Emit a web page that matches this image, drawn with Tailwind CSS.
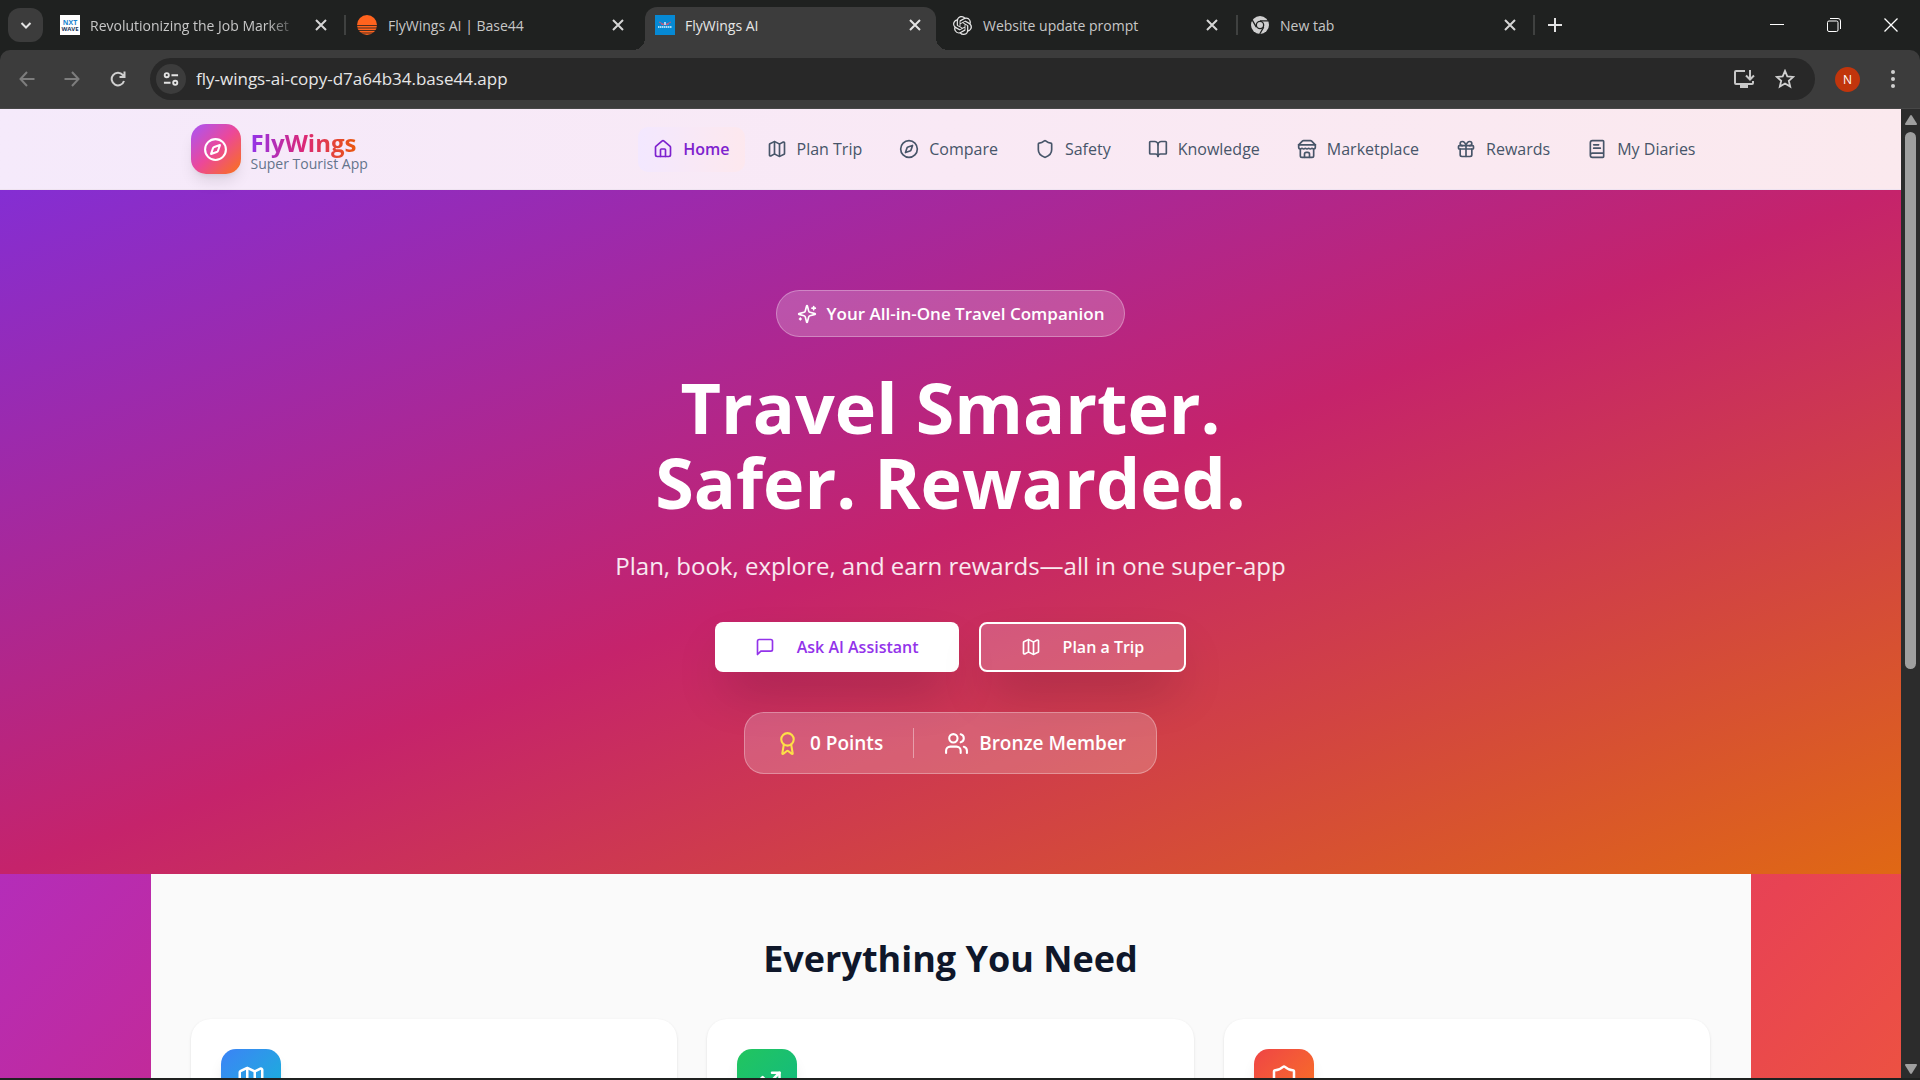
<!DOCTYPE html>
<html lang="en">

<head>
  <meta charset="UTF-8" />
  <meta name="viewport" content="width=device-width, initial-scale=1.0" />
  <title>FlyWings AI</title>
  <script src="https://cdn.jsdelivr.net/npm/@tailwindcss/browser@4"></script>
</head>

<body class="h-screen flex flex-col overflow-hidden bg-[#1f2120] font-['Open_Sans',sans-serif]">

  <!-- Tab strip -->
  <div class="h-[50px] shrink-0 flex items-center bg-[#1f2120] text-[#c7c7c7] text-[14px]">
    <button aria-label="Search tabs" class="ml-2 mr-[5px] w-[35px] h-[34px] shrink-0 rounded-xl bg-[#3c3c3c] flex items-center justify-center">
      <svg class="w-4 h-4" viewBox="0 0 16 16" fill="none" stroke="#e3e3e3" stroke-width="2"><path d="M3.5 6 8 10.500 12.500 6" /></svg>
    </button>

    <div class="w-[296px] flex items-center pl-3 pr-[17px]">
      <span class="w-5 h-5 shrink-0 bg-white flex flex-col justify-center text-center text-[7px] leading-[7px] font-bold text-[#17375e]"><span class="text-[#1c86d1]">NXT</span><span class="text-[6px] leading-[6px]">WAVE</span></span>
      <span class="ml-[10px] flex-1 overflow-hidden whitespace-nowrap mask-r-from-85%">Revolutionizing the Job Market</span>
      <button aria-label="Close tab" class="ml-4"><svg class="w-3 h-3" viewBox="0 0 12 12" stroke="#d5d5d5" stroke-width="2"><path d="M1 1l10 10M11 1 1 11" /></svg></button>
    </div>

    <div class="w-[301px] flex items-center pr-[21px]">
      <span class="w-[2px] h-5 shrink-0 bg-[#3f4140]"></span>
      <svg class="ml-[11px] w-5 h-5 shrink-0" viewBox="0 0 20 20">
        <circle cx="10" cy="10" r="10" fill="#ff631e" />
        <path d="M0 10.500h20M0 13h20M1 15.500h18M3 18h14" stroke="#1f2120" stroke-width=".8" />
      </svg>
      <span class="ml-[11px] flex-1 whitespace-nowrap">FlyWings AI | Base44</span>
      <button aria-label="Close tab"><svg class="w-3 h-3" viewBox="0 0 12 12" stroke="#d5d5d5" stroke-width="2"><path d="M1 1l10 10M11 1 1 11" /></svg></button>
    </div>

    <!-- Active tab -->
    <div class="relative w-[291px] h-[43px] self-end flex items-center pb-[7px] pl-[10px] pr-[15px] rounded-t-xl bg-[#3c3c3c] text-[#e6e6e6]">
      <span class="absolute bottom-0 -left-3 w-3 h-3 bg-[radial-gradient(circle_at_0_0,#1f2120_12px,#3c3c3c_12px)]"></span>
      <span class="absolute bottom-0 -right-3 w-3 h-3 bg-[radial-gradient(circle_at_100%_0,#1f2120_12px,#3c3c3c_12px)]"></span>
      <svg class="w-5 h-5 shrink-0" viewBox="0 0 20 20">
        <rect width="20" height="20" fill="#0689d4" />
        <path d="M4 7l5 2.500M16 7l-5 2.500M6 9l3 1M14 9l-3 1" stroke="#c95a7c" stroke-width="1" />
        <path d="M10 7v3" stroke="#e8e8f5" stroke-width="1.500" />
        <path d="M3 12h14" stroke="#a9dcf7" stroke-width="2" stroke-dasharray="1.500 .5" />
      </svg>
      <span class="ml-[10px] flex-1 whitespace-nowrap">FlyWings AI</span>
      <button aria-label="Close tab"><svg class="w-3 h-3" viewBox="0 0 12 12" stroke="#e6e6e6" stroke-width="2"><path d="M1 1l10 10M11 1 1 11" /></svg></button>
    </div>

    <div class="w-[300px] flex items-center pl-[17px] pr-[18px]">
      <svg class="w-[19px] h-[19px] shrink-0" viewBox="0 0 24 24" fill="#e6e6e6"><path d="M22.2819 9.8211a5.9847 5.9847 0 0 0-.5157-4.9108 6.0462 6.0462 0 0 0-6.5098-2.9A6.0651 6.0651 0 0 0 4.9807 4.1818a5.9847 5.9847 0 0 0-3.9977 2.9 6.0462 6.0462 0 0 0 .7427 7.0966 5.98 5.98 0 0 0 .511 4.9107 6.051 6.051 0 0 0 6.5146 2.9001A5.9847 5.9847 0 0 0 13.2599 24a6.0557 6.0557 0 0 0 5.7718-4.2058 5.9894 5.9894 0 0 0 3.9977-2.9001 6.0557 6.0557 0 0 0-.7475-7.0729zm-9.022 12.6081a4.4755 4.4755 0 0 1-2.8764-1.0408l.1419-.0804 4.7783-2.7582a.7948.7948 0 0 0 .3927-.6813v-6.7369l2.02 1.1686a.071.071 0 0 1 .038.052v5.5826a4.504 4.504 0 0 1-4.4945 4.4944zm-9.6607-4.1254a4.4708 4.4708 0 0 1-.5346-3.0137l.142.0852 4.783 2.7582a.7712.7712 0 0 0 .7806 0l5.8428-3.3685v2.3324a.0804.0804 0 0 1-.0332.0615L9.74 19.9502a4.4992 4.4992 0 0 1-6.1408-1.6464zM2.3408 7.8956a4.485 4.485 0 0 1 2.3655-1.9728V11.6a.7664.7664 0 0 0 .3879.6765l5.8144 3.3543-2.0201 1.1685a.0757.0757 0 0 1-.071 0l-4.8303-2.7865A4.504 4.504 0 0 1 2.3408 7.872zm16.5963 3.8558L13.1038 8.364 15.1192 7.2a.0757.0757 0 0 1 .071 0l4.8303 2.7913a4.4944 4.4944 0 0 1-.6765 8.1042v-5.6772a.79.79 0 0 0-.407-.667zm2.0107-3.0231l-.142-.0852-4.7735-2.7818a.7759.7759 0 0 0-.7854 0L9.409 9.2297V6.8974a.0662.0662 0 0 1 .0284-.0615l4.8303-2.7866a4.4992 4.4992 0 0 1 6.6802 4.66zM8.3065 12.863l-2.02-1.1638a.0804.0804 0 0 1-.038-.0567V6.0742a4.4992 4.4992 0 0 1 7.3757-3.4537l-.142.0805L8.704 5.459a.7948.7948 0 0 0-.3927.6813zm1.0976-2.3654l2.602-1.4998 2.6069 1.4998v2.9994l-2.5974 1.4997-2.6067-1.4997Z" /></svg>
      <span class="ml-[11px] flex-1 whitespace-nowrap">Website update prompt</span>
      <button aria-label="Close tab"><svg class="w-3 h-3" viewBox="0 0 12 12" stroke="#d5d5d5" stroke-width="2"><path d="M1 1l10 10M11 1 1 11" /></svg></button>
    </div>

    <div class="w-[299px] flex items-center">
      <span class="w-[2px] h-5 shrink-0 bg-[#3f4140]"></span>
      <svg class="ml-[13px] w-[18px] h-[18px] shrink-0" viewBox="0 0 18 18">
        <circle cx="9" cy="9" r="9" fill="#cfcfcf" />
        <path d="M9 4.800h8M5.300 11.100l-4-6.900M12.700 11.100l-4 6.900" stroke="#1f2120" stroke-width="1.300" />
        <circle cx="9" cy="9" r="4.300" fill="#1f2120" />
        <circle cx="9" cy="9" r="3" fill="#cfcfcf" />
      </svg>
      <span class="ml-[11px] flex-1 whitespace-nowrap">New tab</span>
      <button aria-label="Close tab"><svg class="w-3 h-3" viewBox="0 0 12 12" stroke="#d5d5d5" stroke-width="2"><path d="M1 1l10 10M11 1 1 11" /></svg></button>
      <span class="ml-[17px] w-[2px] h-5 shrink-0 bg-[#3f4140]"></span>
    </div>
    <button aria-label="New tab" class="ml-[13px]"><svg class="w-[14px] h-[14px]" viewBox="0 0 14 14" stroke="#e3e3e3" stroke-width="2"><path d="M7 0v14M0 7h14" /></svg></button>

    <!-- Window controls -->
    <div class="ml-auto mr-[22px] flex items-center gap-[43px]">
      <button aria-label="Minimize"><svg class="w-[14px] h-[14px]" viewBox="0 0 14 14" stroke="#fff" fill="none"><path d="M0 6.500h14" /></svg></button>
      <button aria-label="Restore"><svg class="w-[14px] h-[14px]" viewBox="0 0 14 14" stroke="#fff" fill="none"><rect x=".5" y="3" width="10.500" height="10.500" rx="1.500" /><path d="M3 .5h8a2.500 2.500 0 0 1 2.500 2.500v8" /></svg></button>
      <button aria-label="Close"><svg class="w-[14px] h-[14px]" viewBox="0 0 14 14" stroke="#fff" stroke-width="1.300" fill="none"><path d="M.5.5l13 13M13.500.5l-13 13" /></svg></button>
    </div>
  </div>

  <!-- Toolbar -->
  <div class="h-[59px] shrink-0 flex items-center rounded-t-[10px] bg-[#3c3c3c] border-b border-[#474747]">
    <button aria-label="Back" class="ml-[19px]"><svg class="w-4 h-4" viewBox="0 0 16 16" fill="none" stroke="#7d7d7d" stroke-width="2"><path d="M15.500 8H1.500M8 1 1.500 8 8 15" /></svg></button>
    <button aria-label="Forward" class="ml-[29px]"><svg class="w-4 h-4" viewBox="0 0 16 16" fill="none" stroke="#7d7d7d" stroke-width="2"><path d="M.5 8h14M8 1l6.500 7L8 15" /></svg></button>
    <button aria-label="Reload" class="ml-[30px]"><svg class="w-4 h-4" viewBox="0 0 16 16" fill="none" stroke="#d0d0d0" stroke-width="2"><path d="M14 10A6.300 6.300 0 1 1 12.800 4L14.500 5.500M14.500 .5v5.500H9.500" /></svg></button>
    <div class="ml-6 flex-1 h-[42px] flex items-center rounded-full bg-[#282828] pl-[6px] pr-5">
      <button aria-label="View site information" class="w-[30px] h-[30px] rounded-full bg-[#3c3c3c] flex items-center justify-center">
        <svg class="w-4 h-4" viewBox="0 0 17 17" fill="none" stroke="#e3e3e3" stroke-width="2"><circle cx="4" cy="4.500" r="2.200" /><path d="M9 4.500h7M1 12.500h7" /><circle cx="13" cy="12.500" r="2.200" /></svg>
      </button>
      <input type="text" aria-label="Address" value="fly-wings-ai-copy-d7a64b34.base44.app" class="ml-[10px] flex-1 bg-transparent text-[17px] text-[#e6e6e6] outline-none" />
      <button aria-label="Install app"><svg class="w-[22px] h-[20px]" viewBox="0 0 22 20" fill="none" stroke="#c7c7c7" stroke-width="2"><path d="M12 2H3a1 1 0 0 0-1 1v11a1 1 0 0 0 1 1h16a1 1 0 0 0 1-1v-2M17 1v9M13 6.500l4 4 4-4" /><path d="M7 17.500h8" stroke-width="3" /></svg></button>
      <button aria-label="Bookmark this tab" class="ml-5"><svg class="w-5 h-5" viewBox="0 0 20 20" fill="none" stroke="#d0d0d0" stroke-width="1.800"><path d="M10 1.900l2.300 5.500 6 .5-4.500 3.900 1.400 5.800L10 14.500l-5.200 3.100 1.400-5.800L1.700 7.900l6-.5z" /></svg></button>
    </div>
    <button aria-label="Profile" class="ml-5 w-[25px] h-[25px] rounded-full bg-[#c1350c] text-white text-[12px] leading-[25px]">N</button>
    <button aria-label="Menu" class="ml-6 mr-[18px]"><svg class="w-[18px] h-[18px]" viewBox="0 0 18 18" fill="#d0d0d0"><circle cx="9" cy="2" r="2" /><circle cx="9" cy="9" r="2" /><circle cx="9" cy="16" r="2" /></svg></button>
  </div>

  <div class="flex-1 min-h-0 flex mb-[2px]">
    <div class="flex-1 min-w-0 overflow-hidden">

      <!-- Header -->
      <header class="relative h-[81px] border-b border-[#eee3f0] bg-linear-to-r from-[#f5eafb] via-[#f9e9f5] to-[#fbe9ee]">
        <div class="max-w-[1600px] mx-auto h-20 px-10 flex items-center justify-between">
          <a href="#" class="flex items-center gap-[10px]">
            <span class="w-[50px] h-[50px] rounded-[15px] bg-linear-to-br/srgb from-[#a855f7] via-[#ec4899] to-[#f97316] shadow-lg flex items-center justify-center">
              <svg class="w-[25px] h-[25px]" viewBox="0 0 24 24" fill="none" stroke="#fff" stroke-width="2" stroke-linecap="round" stroke-linejoin="round"><path d="m16.240 7.760-1.804 5.411a2 2 0 0 1-1.265 1.265L7.760 16.240l1.804-5.411a2 2 0 0 1 1.265-1.265z" /><circle cx="12" cy="12" r="10" /></svg>
            </span>
            <span class="flex flex-col">
              <span class="pt-1 text-[24px] leading-[25px] font-bold"><span class="text-transparent bg-clip-text bg-linear-to-r/srgb from-[#9333ea] via-[#db2777] to-[#ea580c]">FlyWings</span></span>
              <span class="text-[14px] leading-[18px] text-[#64748b]">Super Tourist App</span>
            </span>
          </a>

          <nav class="flex items-center gap-[7px] text-[16px] text-[#475569]">
            <a href="#" class="h-[45px] px-[15px] flex items-center gap-[10px] rounded-[10px] bg-linear-to-r from-[#f3e8ff] to-[#fde8ee] font-semibold text-[#7e22ce]">
              <svg class="w-5 h-5" viewBox="0 0 24 24" fill="none" stroke="currentColor" stroke-width="2" stroke-linecap="round" stroke-linejoin="round"><path d="M15 21v-8a1 1 0 0 0-1-1h-4a1 1 0 0 0-1 1v8" /><path d="M3 10a2 2 0 0 1 .709-1.528l7-5.999a2 2 0 0 1 2.582 0l7 5.999A2 2 0 0 1 21 10v9a2 2 0 0 1-2 2H5a2 2 0 0 1-2-2z" /></svg>
              Home
            </a>
            <a href="#" class="h-[45px] px-[15px] flex items-center gap-[10px]">
              <svg class="w-5 h-5" viewBox="0 0 24 24" fill="none" stroke="currentColor" stroke-width="2" stroke-linecap="round" stroke-linejoin="round"><path d="M14.106 5.553a2 2 0 0 0 1.788 0l3.659-1.830A1 1 0 0 1 21 4.619v12.764a1 1 0 0 1-.553.894l-4.553 2.277a2 2 0 0 1-1.788 0l-4.212-2.106a2 2 0 0 0-1.788 0l-3.659 1.830A1 1 0 0 1 3 19.381V6.618a1 1 0 0 1 .553-.894l4.553-2.277a2 2 0 0 1 1.788 0z" /><path d="M15 5.764v15M9 3.236v15" /></svg>
              Plan Trip
            </a>
            <a href="#" class="h-[45px] px-[15px] flex items-center gap-[10px]">
              <svg class="w-5 h-5" viewBox="0 0 24 24" fill="none" stroke="currentColor" stroke-width="2" stroke-linecap="round" stroke-linejoin="round"><path d="m16.240 7.760-1.804 5.411a2 2 0 0 1-1.265 1.265L7.760 16.240l1.804-5.411a2 2 0 0 1 1.265-1.265z" /><circle cx="12" cy="12" r="10" /></svg>
              Compare
            </a>
            <a href="#" class="h-[45px] px-[15px] flex items-center gap-[10px]">
              <svg class="w-5 h-5" viewBox="0 0 24 24" fill="none" stroke="currentColor" stroke-width="2" stroke-linecap="round" stroke-linejoin="round"><path d="M20 13c0 5-3.500 7.500-7.660 8.950a1 1 0 0 1-.67-.01C7.500 20.500 4 18 4 13V6a1 1 0 0 1 1-1c2 0 4.500-1.200 6.240-2.720a1.170 1.170 0 0 1 1.520 0C14.510 3.810 17 5 19 5a1 1 0 0 1 1 1z" /></svg>
              Safety
            </a>
            <a href="#" class="h-[45px] px-[15px] flex items-center gap-[10px]">
              <svg class="w-5 h-5" viewBox="0 0 24 24" fill="none" stroke="currentColor" stroke-width="2" stroke-linecap="round" stroke-linejoin="round"><path d="M12 7v14" /><path d="M3 18a1 1 0 0 1-1-1V4a1 1 0 0 1 1-1h5a4 4 0 0 1 4 4 4 4 0 0 1 4-4h5a1 1 0 0 1 1 1v13a1 1 0 0 1-1 1h-6a3 3 0 0 0-3 3 3 3 0 0 0-3-3z" /></svg>
              Knowledge
            </a>
            <a href="#" class="h-[45px] px-[15px] flex items-center gap-[10px]">
              <svg class="w-5 h-5" viewBox="0 0 24 24" fill="none" stroke="currentColor" stroke-width="2" stroke-linecap="round" stroke-linejoin="round"><path d="m2 7 4.410-4.410A2 2 0 0 1 7.830 2h8.340a2 2 0 0 1 1.420.590L22 7" /><path d="M4 12v8a2 2 0 0 0 2 2h12a2 2 0 0 0 2-2v-8" /><path d="M15 22v-4a2 2 0 0 0-2-2h-2a2 2 0 0 0-2 2v4" /><path d="M2 7h20" /><path d="M22 7v3a2 2 0 0 1-2 2a2.700 2.700 0 0 1-1.590-.630.7.7 0 0 0-.820 0A2.700 2.700 0 0 1 16 12a2.700 2.700 0 0 1-1.590-.630.7.7 0 0 0-.820 0A2.700 2.700 0 0 1 12 12a2.700 2.700 0 0 1-1.590-.630.7.7 0 0 0-.820 0A2.700 2.700 0 0 1 8 12a2.700 2.700 0 0 1-1.590-.630.7.7 0 0 0-.820 0A2.700 2.700 0 0 1 4 12a2 2 0 0 1-2-2V7" /></svg>
              Marketplace
            </a>
            <a href="#" class="h-[45px] px-[15px] flex items-center gap-[10px]">
              <svg class="w-5 h-5" viewBox="0 0 24 24" fill="none" stroke="currentColor" stroke-width="2" stroke-linecap="round" stroke-linejoin="round"><rect x="3" y="8" width="18" height="4" rx="1" /><path d="M12 8v13" /><path d="M19 12v7a2 2 0 0 1-2 2H7a2 2 0 0 1-2-2v-7" /><path d="M7.500 8a2.500 2.500 0 0 1 0-5A4.800 8 0 0 1 12 8a4.800 8 0 0 1 4.500-5 2.500 2.500 0 0 1 0 5" /></svg>
              Rewards
            </a>
            <a href="#" class="h-[45px] px-[15px] flex items-center gap-[10px]">
              <svg class="w-5 h-5" viewBox="0 0 24 24" fill="none" stroke="currentColor" stroke-width="2" stroke-linecap="round" stroke-linejoin="round"><path d="M4 19.500v-15A2.500 2.500 0 0 1 6.500 2H19a1 1 0 0 1 1 1v18a1 1 0 0 1-1 1H6.500a1 1 0 0 1 0-5H20" /><path d="M8 11h8M8 7h6" /></svg>
              My Diaries
            </a>
          </nav>
        </div>
      </header>

      <!-- Hero -->
      <section class="bg-linear-to-br/srgb from-[#842ed3] via-[#c5236b] to-[#e06814] pt-[100px] pb-[100px] flex flex-col items-center text-white">
        <div class="h-[47px] px-5 flex items-center gap-[10px] rounded-full border border-white/30 bg-white/20 text-[17px] font-semibold">
          <svg class="w-5 h-5" viewBox="0 0 24 24" fill="none" stroke="currentColor" stroke-width="2" stroke-linecap="round" stroke-linejoin="round"><path d="M9.937 15.500A2 2 0 0 0 8.500 14.063l-6.135-1.582a.5.5 0 0 1 0-.962L8.500 9.936A2 2 0 0 0 9.937 8.500l1.582-6.135a.5.5 0 0 1 .963 0L14.063 8.500A2 2 0 0 0 15.500 9.937l6.135 1.581a.5.5 0 0 1 0 .964L15.500 14.063a2 2 0 0 0-1.437 1.437l-1.582 6.135a.5.5 0 0 1-.963 0z" /><path d="M20 3v4M22 5h-4M4 17v2M5 18H3" /></svg>
          Your All-in-One Travel Companion
        </div>

        <h1 class="mt-[33px] text-center text-[70px] leading-[75px] font-bold">Travel Smarter.<br />Safer. Rewarded.</h1>

        <p class="mt-7 text-[24px] leading-[35px] text-white/90">Plan, book, explore, and earn rewards—all in one super-app</p>

        <div class="mt-[39px] flex gap-5 text-[16px] font-semibold">
          <button class="h-[50px] px-10 flex items-center gap-[22px] rounded-[8px] bg-white text-[#9333ea] shadow-2xl">
            <svg class="w-5 h-5" viewBox="0 0 24 24" fill="none" stroke="currentColor" stroke-width="2" stroke-linecap="round" stroke-linejoin="round"><path d="M21 15a2 2 0 0 1-2 2H7l-4 4V5a2 2 0 0 1 2-2h14a2 2 0 0 1 2 2z" /></svg>
            Ask AI Assistant
          </button>
          <button class="h-[50px] px-10 flex items-center gap-[22px] rounded-[8px] border-2 border-white bg-white/20 shadow-2xl">
            <svg class="w-5 h-5" viewBox="0 0 24 24" fill="none" stroke="currentColor" stroke-width="2" stroke-linecap="round" stroke-linejoin="round"><path d="M14.106 5.553a2 2 0 0 0 1.788 0l3.659-1.830A1 1 0 0 1 21 4.619v12.764a1 1 0 0 1-.553.894l-4.553 2.277a2 2 0 0 1-1.788 0l-4.212-2.106a2 2 0 0 0-1.788 0l-3.659 1.830A1 1 0 0 1 3 19.381V6.618a1 1 0 0 1 .553-.894l4.553-2.277a2 2 0 0 1 1.788 0z" /><path d="M15 5.764v15M9 3.236v15" /></svg>
            Plan a Trip
          </button>
        </div>

        <div class="mt-10 h-[62px] px-[30px] flex items-center gap-[30px] rounded-[20px] border border-white/30 bg-white/20 text-[19px] font-semibold">
          <div class="flex items-center gap-[10px]">
            <svg class="w-[25px] h-[25px] text-[#fde047]" viewBox="0 0 24 24" fill="none" stroke="currentColor" stroke-width="2" stroke-linecap="round" stroke-linejoin="round"><path d="m15.477 12.890 1.515 8.526a.5.5 0 0 1-.810.470l-3.580-2.687a1 1 0 0 0-1.197 0l-3.586 2.686a.5.5 0 0 1-.810-.469l1.514-8.526" /><circle cx="12" cy="8" r="6" /></svg>
            0 Points
          </div>
          <span class="w-px h-[30px] bg-white/40"></span>
          <div class="flex items-center gap-[10px]">
            <svg class="w-[25px] h-[25px]" viewBox="0 0 24 24" fill="none" stroke="currentColor" stroke-width="2" stroke-linecap="round" stroke-linejoin="round"><path d="M16 21v-2a4 4 0 0 0-4-4H6a4 4 0 0 0-4 4v2" /><circle cx="9" cy="7" r="4" /><path d="M22 21v-2a4 4 0 0 0-3-3.870M16 3.130a4 4 0 0 1 0 7.750" /></svg>
            Bronze Member
          </div>
        </div>
      </section>

      <!-- Features -->
      <div class="bg-[linear-gradient(135deg,#b42db9_0%,#c22a99_17%,#e84353_83%,#ed543f_100%)]">
        <section class="max-w-[1600px] mx-auto px-10 pt-[60px] bg-[#fafafa]">
          <h2 class="text-center text-[36px] leading-[50px] font-bold text-[#0f172a]">Everything You Need</h2>
          <div class="mt-[35px] grid grid-cols-3 gap-[30px]">
            <div class="p-[30px] rounded-[20px] bg-white shadow-sm">
              <div class="w-[60px] h-[60px] rounded-[15px] bg-linear-to-br from-[#3b82f6] to-[#06b6d4] shadow-lg flex items-center justify-center">
                <svg class="w-[30px] h-[30px]" viewBox="0 0 24 24" fill="none" stroke="#fff" stroke-width="2" stroke-linecap="round" stroke-linejoin="round"><path d="M14.106 5.553a2 2 0 0 0 1.788 0l3.659-1.830A1 1 0 0 1 21 4.619v12.764a1 1 0 0 1-.553.894l-4.553 2.277a2 2 0 0 1-1.788 0l-4.212-2.106a2 2 0 0 0-1.788 0l-3.659 1.830A1 1 0 0 1 3 19.381V6.618a1 1 0 0 1 .553-.894l4.553-2.277a2 2 0 0 1 1.788 0z" /><path d="M15 5.764v15M9 3.236v15" /></svg>
              </div>
            </div>
            <div class="p-[30px] rounded-[20px] bg-white shadow-sm">
              <div class="w-[60px] h-[60px] rounded-[15px] bg-linear-to-br from-[#22c55e] to-[#10b981] shadow-lg flex items-center justify-center">
                <svg class="w-[30px] h-[30px]" viewBox="0 0 24 24" fill="none" stroke="#fff" stroke-width="2" stroke-linecap="round" stroke-linejoin="round"><path d="M22 7l-8.500 8.500-5-5L2 17" /><path d="M16 7h6v6" /></svg>
              </div>
            </div>
            <div class="p-[30px] rounded-[20px] bg-white shadow-sm">
              <div class="w-[60px] h-[60px] rounded-[15px] bg-linear-to-br from-[#ef4444] to-[#f97316] shadow-lg flex items-center justify-center">
                <svg class="w-[30px] h-[30px]" viewBox="0 0 24 24" fill="none" stroke="#fff" stroke-width="2" stroke-linecap="round" stroke-linejoin="round"><path d="M20 13c0 5-3.500 7.500-7.660 8.950a1 1 0 0 1-.67-.01C7.500 20.500 4 18 4 13V6a1 1 0 0 1 1-1c2 0 4.500-1.200 6.240-2.720a1.170 1.170 0 0 1 1.520 0C14.510 3.810 17 5 19 5a1 1 0 0 1 1 1z" /></svg>
              </div>
            </div>
          </div>
        </section>
      </div>
    </div>

    <!-- Scrollbar -->
    <div class="w-[19px] shrink-0 flex flex-col items-center bg-[#2c2c2c] pt-[6px] pb-1">
      <svg class="w-3 h-[10px]" viewBox="0 0 12 10" fill="#9f9f9f"><path d="M5 .8a1.200 1.200 0 0 1 2 0L11.800 8.500A1 1 0 0 1 11 10H1a1 1 0 0 1-.8-1.500z" /></svg>
      <div class="mt-[7px] w-[11px] h-[56%] rounded-full bg-[#9f9f9f]"></div>
      <svg class="mt-auto w-3 h-[10px]" viewBox="0 0 12 10" fill="#9f9f9f"><path d="M5 9.200a1.200 1.200 0 0 0 2 0L11.800 1.500A1 1 0 0 0 11 0H1a1 1 0 0 0-.8 1.500z" /></svg>
    </div>
  </div>

</body>

</html>
